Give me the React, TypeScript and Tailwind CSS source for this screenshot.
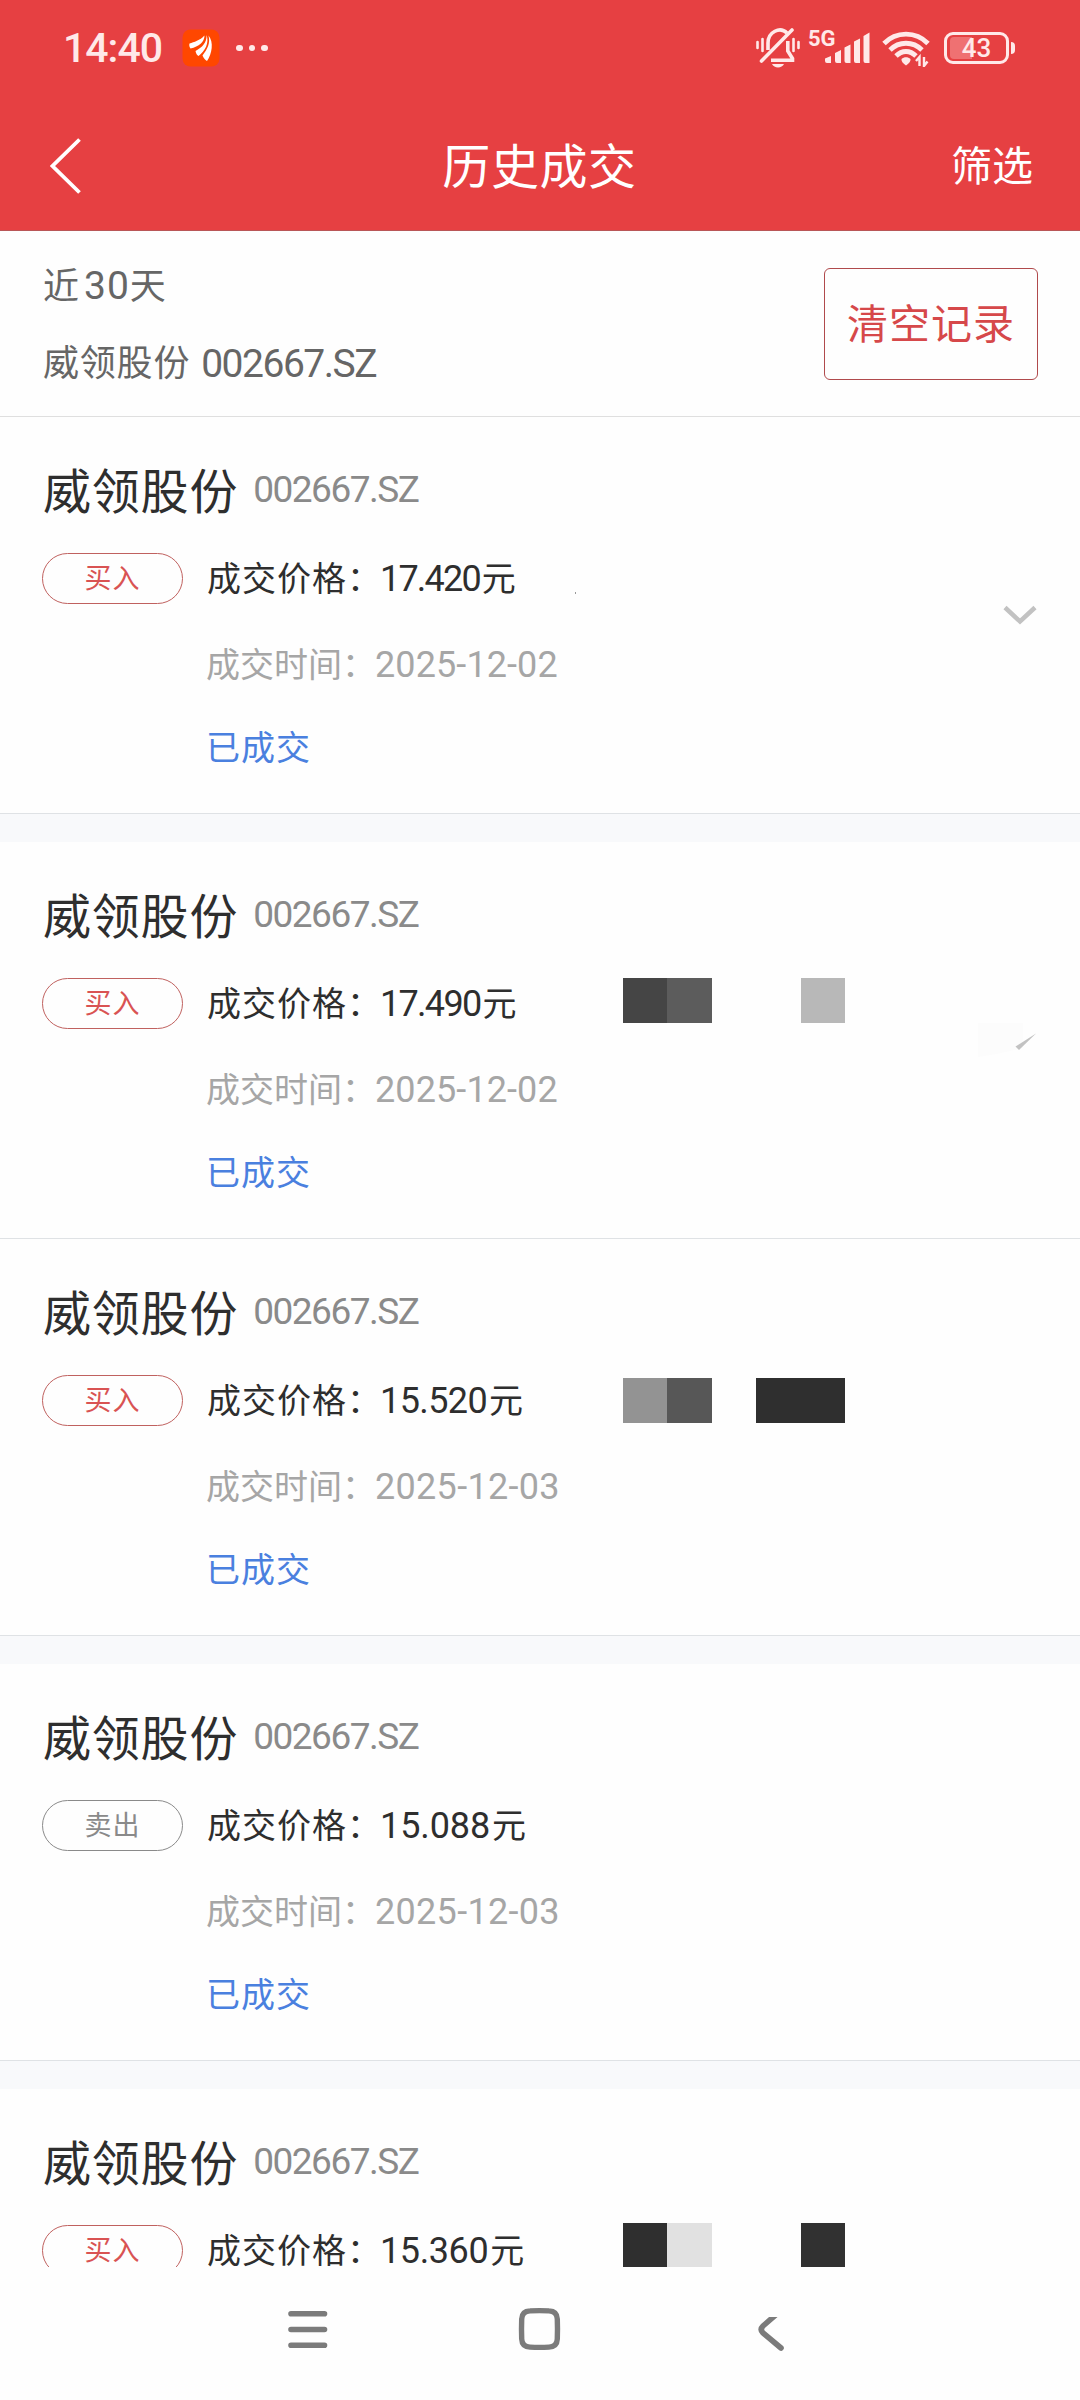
import { clsx } from "clsx";

type Trade = {
  side: "buy" | "sell";
  price: string;
  priceClass: string;
  date: string;
  dateClass: string;
  gapAfter: boolean;
  blocks?: string[];
  blocksTop?: string;
};

const STOCK_NAME = "威领股份";
const STOCK_CODE = "002667.SZ";

const TRADES: Trade[] = [
  {
    side: "buy",
    price: "17.420",
    priceClass: "tracking-[-1.8px]",
    date: "2025-12-02",
    dateClass: "tracking-[0.1px]",
    gapAfter: true,
  },
  {
    side: "buy",
    price: "17.490",
    priceClass: "tracking-[-1.7px]",
    date: "2025-12-02",
    dateClass: "tracking-[0.1px]",
    gapAfter: false,
    blocks: ["bg-[#454545]", "bg-[#5c5c5c]", "", "", "bg-[#b8b8b8]"],
    blocksTop: "top-[136px]",
  },
  {
    side: "buy",
    price: "15.520",
    priceClass: "tracking-[-0.6px]",
    date: "2025-12-03",
    dateClass: "tracking-[0.3px]",
    gapAfter: true,
    blocks: ["bg-[#939393]", "bg-[#575757]", "", "bg-[#2f2f2f]", "bg-[#2f2f2f]"],
    blocksTop: "top-[139px]",
  },
  {
    side: "sell",
    price: "15.088",
    priceClass: "tracking-[-0.1px]",
    date: "2025-12-03",
    dateClass: "tracking-[0.3px]",
    gapAfter: true,
  },
  {
    side: "buy",
    price: "15.360",
    priceClass: "tracking-[-0.4px]",
    date: "2025-12-03",
    dateClass: "tracking-[0.3px]",
    gapAfter: false,
    blocks: ["bg-[#2f2f2f]", "bg-[#e1e1e1]", "", "", "bg-[#313131]"],
    blocksTop: "top-[134px]",
  },
];

function AppBadge() {
  return (
    <svg width="38" height="38" viewBox="0 0 38 38">
      <rect x="0.5" y="0.5" width="37" height="37" rx="8" fill="#ff4700" />
      <g fill="#fff">
        <path d="M7.500 14.500C12 13 18 11.500 22.500 6.500C22.500 13 17 17.500 8.500 19.500C7.300 18 7 16 7.500 14.500Z" />
        <path d="M24.500 6C25 13.500 20 18.500 13.500 22C14 24.500 15 26.500 16.500 27C23 22 27.500 14 24.500 6Z" />
        <path d="M26.500 6.500C28.500 14 25.500 20 20.500 26.500C21.500 29 23 31 25 32C30 25 32 13 26.500 6.500Z" />
      </g>
    </svg>
  );
}

function MutedBell() {
  return (
    <svg width="44" height="42" viewBox="0 0 44 42" fill="none" stroke="#ffe9e9" strokeWidth="3.6">
      <path d="M12 23V16C12 5 24 -1 31 6" />
      <path d="M31.800 14V24L36.500 31.500V33.300H15" />
      <path d="M5.500 34L36 3" strokeLinecap="round" />
      <path d="M16 37H28C26 41.500 18 41.500 16 37Z" fill="#ffe9e9" stroke="none" />
      <path d="M1.500 15V21M6.500 12V24M37.500 12V24M42.500 15V21" strokeWidth="2.6" strokeLinecap="round" />
    </svg>
  );
}

function SignalBars() {
  return (
    <svg width="45" height="32" viewBox="0 0 45 32" fill="#ffe9e9">
      <path d="M0 26.500L6 24V31H2Q0 31 0 29ZM10 21L16 18V31H12Q10 31 10 29ZM19.500 15.500L25.500 12.500V31H21.500Q19.500 31 19.500 29ZM29 9.500L35 6.500V31H31Q29 31 29 29ZM38.500 4L44.500 0.500V31H40.500Q38.500 31 38.500 29Z" />
    </svg>
  );
}

function WifiIcon() {
  return (
    <svg width="48" height="38" viewBox="0 0 48 38" fill="none" stroke="#ffe9e9" strokeWidth="4.8">
      <path d="M2 14.500C14 2 34 2 46 14.500" />
      <path d="M8 21C17 12 31 12 40 21" />
      <path d="M14 27C20 21 28 21 34 27" />
      <path d="M19.500 30C22 27.800 26 27.800 28.500 30Q29 33 24 36.500Q19 33 19.500 30Z" fill="#ffe9e9" stroke="none" />
      <path d="M37.500 37V28L34 32M42 28V37L45.500 32.500" strokeWidth="2.4" />
    </svg>
  );
}

function Battery() {
  return (
    <div className="flex items-center">
      <div className="relative flex h-8 w-[65px] items-center justify-center rounded-[9px] border-[3px] border-[#ffe9e9]">
        <span className="absolute left-[3px] top-[2px] h-[22px] w-[22px] rounded-l-[4px] bg-[#ef7172]" />
        <span className="relative text-[26px] font-medium leading-none text-[#ffe9e9]">43</span>
      </div>
      <span className="ml-[2px] h-3 w-1 rounded-r-full bg-[#ffe9e9]" />
    </div>
  );
}

function StatusBar() {
  return (
    <div className="flex h-24 items-center justify-between pl-[63px] pr-[65px]">
      <div className="flex items-center">
        <span className="w-[119px] text-[41px] font-medium leading-none tracking-[-1px] text-[#ffe9e9]">
          14:40
        </span>
        <AppBadge />
        <span className="ml-4 flex gap-1.5">
          <i className="size-[6.5px] rounded-full bg-[#ffe9e9]" />
          <i className="size-[6.5px] rounded-full bg-[#ffe9e9]" />
          <i className="size-[6.5px] rounded-full bg-[#ffe9e9]" />
        </span>
      </div>
      <div className="flex items-center">
        <MutedBell />
        <span className="ml-2 mb-[18px] w-[17px] text-[22px] font-bold leading-none text-[#ffe9e9]">5G</span>
        <SignalBars />
        <span className="ml-3 mr-[14px]">
          <WifiIcon />
        </span>
        <Battery />
      </div>
    </div>
  );
}

function TitleBar() {
  return (
    <div className="grid h-[134px] grid-cols-[1fr_auto_1fr] items-center pb-0 pl-[50px] pr-[47px] pt-[9px] text-white">
      <svg className="mb-1" width="32" height="56" viewBox="0 0 32 56" fill="none" stroke="currentColor" strokeWidth="3.8">
        <path d="M29.500 1.500L2.500 28L29.500 54.500" />
      </svg>
      <h1 className="mr-1 text-center text-5xl leading-none tracking-[0.6px]">历史成交</h1>
      <button className="text-right text-[41px] leading-none">筛选</button>
    </div>
  );
}

function Summary() {
  return (
    <section className="flex h-[186px] items-center justify-between border-b border-[#dfdfdf] pl-[43px] pr-[42px]">
      <div className="flex flex-col pt-0.5 text-[#666]">
        <p className="h-[78px] text-4xl leading-[36px] tracking-[1px]">
          近<span className="ml-1 text-[39px]">30</span>天
        </p>
        <p className="flex items-center text-4xl leading-[36px] tracking-[0.8px]">
          {STOCK_NAME}
          <span className="ml-[11px] text-[39px] tracking-[-1.5px]">{STOCK_CODE}</span>
        </p>
      </div>
      <button className="h-[112px] w-[214px] rounded-md border border-[#b04a4c] pt-[3px] text-[41px] leading-none tracking-[1px] text-[#d6484a]">
        清空记录
      </button>
    </section>
  );
}

function TradeItem({ trade }: { trade: Trade }) {
  const isBuy = trade.side === "buy";

  return (
    <article
      className={clsx(
        "relative box-content h-[396px] shrink-0 border-b border-[#dfe2e5] bg-[#fefefe]",
        trade.gapAfter && "mb-7"
      )}
    >
      <div className="flex items-start pl-[43px] pt-[50px]">
        <h2 className="text-5xl leading-[52px] tracking-[0.8px] text-[#2e2e2e]">{STOCK_NAME}</h2>
        <span className="ml-[15px] text-[37px] leading-[46px] tracking-[-1.5px] text-[#8a8a8a]">
          {STOCK_CODE}
        </span>
      </div>
      <div className="mt-[34px] flex items-center pl-[42px]">
        <span
          className={clsx(
            "flex h-[51px] w-[141px] items-center justify-center rounded-full border pt-0.5 text-[27px] leading-none tracking-[1px]",
            isBuy ? "border-[#c0615f] text-[#d95353]" : "border-[#8a8a8a] text-[#8a8a8a]"
          )}
        >
          {isBuy ? "买入" : "卖出"}
        </span>
        <p className="ml-6 flex items-center text-[34px] leading-[50px] tracking-[1px] text-[#2e2e2e]">
          <span className="w-[173px] whitespace-nowrap">成交价格：</span>
          <span className={clsx("text-4xl leading-[50px]", trade.priceClass)}>{trade.price}</span>
          <span className="ml-0.5">元</span>
        </p>
      </div>
      <div className="pl-[206px] text-[34px]">
        <p className="mt-9 flex items-center leading-[50px] text-[#a6a6a6]">
          <span className="w-[169px] whitespace-nowrap">成交时间：</span>
          <span className={clsx("text-4xl leading-[50px]", trade.dateClass)}>{trade.date}</span>
        </p>
        <p className="mt-[33px] leading-[50px] tracking-[1px] text-[#4a80df]">已成交</p>
      </div>
      {trade.blocks && (
        <div className={clsx("absolute left-[622.5px] flex", trade.blocksTop)}>
          {trade.blocks.map((color, i) => (
            <span key={i} className={clsx("h-[44.5px] w-[44.5px]", color)} />
          ))}
        </div>
      )}
    </article>
  );
}

function NavigationBar() {
  return (
    <nav className="flex h-[133px] items-start bg-[#fefefe] pl-[287px] pt-10 text-[#7b7b7b]">
      <svg width="41" height="44" viewBox="0 0 41 44" stroke="currentColor" strokeWidth="5.6" strokeLinecap="round">
        <path d="M4 6.700H37.500M4 22.500H37.500M4 38.300H37.500" />
      </svg>
      <svg className="ml-[190px]" width="43" height="44" viewBox="0 0 43 44" fill="none" stroke="currentColor" strokeWidth="5.4">
        <path d="M12 3.900Q21.500 3.300 31 3.900Q39 4.200 39.300 12Q39.700 22 39.300 32Q39 39.800 31 40.100Q21.500 40.700 12 40.100Q4 39.800 3.700 32Q3.300 22 3.700 12Q4 4.200 12 3.900Z" />
      </svg>
      <svg className="ml-[196px] mt-[10px]" width="30" height="36" viewBox="0 0 30 36" fill="none" stroke="currentColor" strokeWidth="5.6" strokeLinecap="round">
        <path d="M22 -5L6 9Q2.500 12.500 6 16L24 31" />
      </svg>
    </nav>
  );
}

export default function App() {
  return (
    <div className="flex h-[2400px] w-[1080px] flex-col overflow-hidden bg-[#fefefe] font-[Roboto,'Noto_Sans_CJK_SC',sans-serif]">
      <header className="h-[231px] shrink-0 border-b border-[#b95657] bg-[#e64042]">
        <StatusBar />
        <TitleBar />
      </header>
      <Summary />
      <main className="relative flex h-[1850px] shrink-0 flex-col overflow-hidden bg-[#f8f9fb]">
        {TRADES.map((trade, i) => (
          <TradeItem key={i} trade={trade} />
        ))}
        <svg className="absolute left-[1003px] top-[188px]" width="34" height="22" viewBox="0 0 34 22" fill="none" stroke="#c2c2c2" strokeWidth="4.5">
          <path d="M2 2.500L17 16.500L32 2.500" />
        </svg>
        <span className="absolute left-[575px] top-[175px] h-[2px] w-px bg-[#9a9a9a]" />
        <svg className="absolute left-[978px] top-[606px]" width="60" height="36" viewBox="0 0 60 36">
          <path d="M0 0H45V25Q22 31 0 34Z" fill="#fcfcfc" />
          <path d="M37.500 23.500L58 10.500L41 27Z" fill="#c2c2c2" />
        </svg>
      </main>
      <NavigationBar />
    </div>
  );
}
